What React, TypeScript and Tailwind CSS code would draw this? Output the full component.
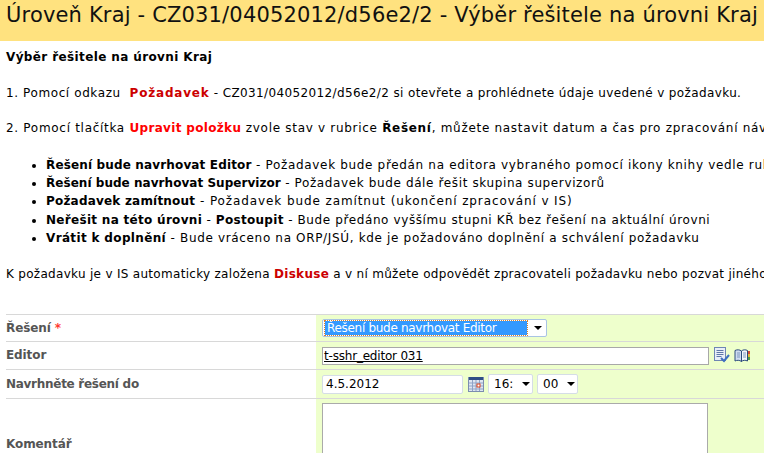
import React from "react";

const Calendar = () => (
  <svg width="16" height="16" viewBox="0 0 16 16" className="shrink-0">
    <rect x="0.5" y="1.5" width="15" height="14" fill="#dfe6f2" stroke="#7b8db0" />
    <rect x="1" y="1" width="14" height="3" fill="#2f4f86" />
    <path d="M1 7h14M1 10h14M1 13h14M4.500 4v11M8 4v11M11.500 4v11" stroke="#8fa3c7" strokeWidth="1" />
    <rect x="9" y="8" width="3" height="3" fill="#fff" stroke="#d8401c" />
  </svg>
);

const NoteCheck = () => (
  <svg width="17" height="17" viewBox="0 0 17 17" className="shrink-0">
    <rect x="1.500" y="0.500" width="11" height="13" fill="#e9eef8" stroke="#6f86b3" />
    <path d="M3.500 3.500h7M3.500 5.500h7M3.500 7.500h7M3.500 9.500h5" stroke="#5f77a8" />
    <path d="M8 11l3 3 5-6" fill="none" stroke="#3f6fc0" strokeWidth="2" />
  </svg>
);

const Book = () => (
  <svg width="16" height="14" viewBox="0 0 16 14" className="shrink-0">
    <path d="M1 1.500C3 0.500 5.500 0.500 7.500 2V12.500C5.500 11 3 11 1 12Z" fill="#cfdcf0" stroke="#2c4a7c" />
    <path d="M7.500 2C9 0.500 11.500 0.500 13.500 1.500V12C11.500 11 9 11 7.500 12.500Z" fill="#f3f6fb" stroke="#2c4a7c" />
    <path d="M3 4h3M3 6h3M3 8h3M9 4h3M9 6h3M9 8h3" stroke="#7f97bf" />
    <rect x="14" y="2" width="2" height="3" fill="#d24a3a" />
    <rect x="14" y="5" width="2" height="3" fill="#e0b93a" />
    <rect x="14" y="8" width="2" height="3" fill="#4a9a4a" />
  </svg>
);

const Arrow = () => (
  <span className="ml-auto w-0 h-0 border-x-[4px] border-x-transparent border-t-[4px] border-t-black" />
);

const Sel = ({ text, cls }: { text: string; cls: string }) => (
  <div className={`flex items-center h-[20px] bg-white border border-[#d5dde6] rounded-[2px] pl-[5px] pr-[2px] tracking-normal ${cls}`}>
    {text}
    <Arrow />
  </div>
);

const Row = ({ h, label, req, children, end, labelCls }: { h: string; label: string; req?: boolean; children: React.ReactNode; end?: boolean; labelCls?: string }) => (
  <div className={`flex border-t border-[#d8d8d8] ${h}`}>
    <div className={`w-[310px] shrink-0 flex font-bold text-[#555] ${labelCls ?? "tracking-[-0.1px]"} ${end ? "items-start pt-[38px]" : "items-center"}`}>
      <span>
        {label}
        {req && <span className="text-[#ff3b2f]"> *</span>}
      </span>
    </div>
    <div className="flex-1 bg-[#eeffcc] pl-[6px] flex items-center min-w-0 tracking-normal">{children}</div>
  </div>
);

export default function App() {
  return (
    <div className="w-[764px] h-[453px] overflow-hidden bg-white text-black whitespace-nowrap font-['DejaVu_Sans',sans-serif] text-[12px]">
      <div className="h-[41px] bg-[#ffe27f] pl-[6px] pt-[2px] text-[21px] tracking-[0.17px] leading-[27px] text-[#111]">
        Úroveň Kraj - CZ031/04052012/d56e2/2 - Výběr řešitele na úrovni Kraj
      </div>
      <div className="pl-[6px] pt-[9px] leading-[15px] tracking-[0.45px]">
        <div className="font-bold tracking-[0.38px]">Výběr řešitele na úrovni Kraj</div>
        <div className="mt-[21px]">
          <span className="tracking-[0.6px]">1. Pomocí odkazu&nbsp; </span>
          <span className="font-bold text-[#cc0000] tracking-[0.8px]">Požadavek</span>
          <span className="tracking-[0.38px]"> - CZ031/04052012/d56e2/2 si otevřete a prohlédnete údaje uvedené v požadavku.</span>
        </div>
        <div className="mt-[20px] tracking-[0.7px]">
          2. Pomocí tlačítka <span className="font-bold text-[#ff0000] tracking-[0.33px]">Upravit položku</span> zvole stav v rubrice <b>Řešení</b>, můžete nastavit datum a čas pro zpracování návrhu
        </div>
        <ul className="mt-[20px] pl-[40px] list-disc leading-[18.200px]">
          <li className="tracking-[0.67px]">
            <b className="tracking-[0.15px]">Řešení bude navrhovat Editor</b> - Požadavek bude předán na editora vybraného pomocí ikony knihy vedle rubriky
          </li>
          <li className="tracking-[0.62px]">
            <b className="tracking-[0.04px]">Řešení bude navrhovat Supervizor</b> - Požadavek bude dále řešit skupina supervizorů
          </li>
          <li className="tracking-[0.9px]">
            <b className="tracking-[0.2px]">Požadavek zamítnout</b> - Požadavek bude zamítnut (ukončení zpracování v IS)
          </li>
          <li className="tracking-[0.61px]">
            <b className="tracking-[0.3px]">Neřešit na této úrovni</b> - <b className="tracking-[0.3px]">Postoupit</b> - Bude předáno vyššímu stupni KŘ bez řešení na aktuální úrovni
          </li>
          <li className="tracking-[0.66px]">
            <b className="tracking-[0.35px]">Vrátit k doplnění</b> - Bude vráceno na ORP/JSÚ, kde je požadováno doplnění a schválení požadavku
          </li>
        </ul>
        <div className="mt-[20px] tracking-[0.3px]">
          K požadavku je v IS automaticky založena <span className="font-bold text-[#cc0000]">Diskuse</span> a v ní můžete odpovědět zpracovateli požadavku nebo pozvat jiného
        </div>
        <div className="mt-[32px]">
          <Row h="h-[27px]" label="Řešení" req>
            <div className="flex items-center w-[225px] h-[18px] bg-white border border-[#a9c4e4] rounded-[2px] pl-[2px] pr-[4px]">
              <span className="w-[202px] h-[14px] bg-[#3399ff] text-white leading-[14px] pl-[2px] tracking-[-0.3px] outline-1 outline-dotted outline-[#d9822b]">Řešení bude navrhovat Editor</span>
              <Arrow />
            </div>
          </Row>
          <Row h="h-[28px]" label="Editor">
            <div className="w-[387px] h-[18px] bg-white border border-[#a8a8a8] leading-[16px] pl-[1px] underline tracking-[-0.2px]">t-sshr_editor 031</div>
            <span className="ml-[4px]"><NoteCheck /></span>
            <span className="ml-[4px]"><Book /></span>
          </Row>
          <Row h="h-[29px]" label="Navrhněte řešení do" labelCls="tracking-[-0.28px]">
            <div className="w-[141px] h-[19px] bg-white border border-[#d5dde6] rounded-[2px] leading-[17px] pl-[3px]">4.5.2012</div>
            <span className="ml-[5px]"><Calendar /></span>
            <Sel text="16:" cls="ml-[4px] w-[45px]" />
            <Sel text="00" cls="ml-[4px] w-[41px]" />
          </Row>
          <Row h="h-[60px]" label="Komentář" end>
            <div className="w-[386px] h-[60px] mt-[4px] self-start bg-white border border-[#aaaaaa] border-b-0" />
          </Row>
        </div>
      </div>
    </div>
  );
}
